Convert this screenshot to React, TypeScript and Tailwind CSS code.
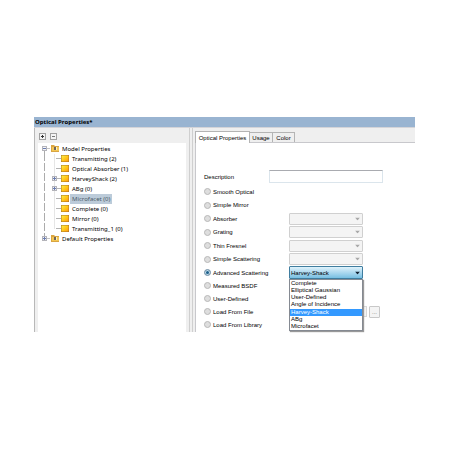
import clsx from 'clsx'

type Node = { label: string; kind: 'folder' | 'item'; box?: 'plus' | 'minus'; selected?: boolean; first?: boolean; last?: boolean }

const nodes: Node[] = [
  { label: 'Model Properties', kind: 'folder', box: 'minus', first: true },
  { label: 'Transmitting (2)', kind: 'item' },
  { label: 'Optical Absorber (1)', kind: 'item' },
  { label: 'HarveyShack (2)', kind: 'item', box: 'plus' },
  { label: 'ABg (0)', kind: 'item', box: 'plus' },
  { label: 'Microfacet (0)', kind: 'item', selected: true },
  { label: 'Complete (0)', kind: 'item' },
  { label: 'Mirror (0)', kind: 'item' },
  { label: 'Transmitting_1 (0)', kind: 'item', last: true },
  { label: 'Default Properties', kind: 'folder', box: 'plus', last: true },
]

const surfaces = [
  { label: 'Smooth Optical', select: false },
  { label: 'Simple Mirror', select: false },
  { label: 'Absorber', select: true },
  { label: 'Grating', select: true },
  { label: 'Thin Fresnel', select: true },
  { label: 'Simple Scattering', select: true },
]

const models = [
  'Complete',
  'Elliptical Gaussian',
  'User-Defined',
  'Angle of Incidence',
  'Harvey-Shack',
  'ABg',
  'Microfacet',
]

function Branch({ node }: { node: Node }) {
  const folder = node.kind === 'folder'
  const boxX = folder ? 4 : 14
  return (
    <svg width={folder ? 22 : 32} height="10" className="shrink-0" aria-hidden="true">
      <defs>
        <linearGradient id="tile" x1="0" y1="0" x2="1" y2="1">
          <stop offset="0" stopColor="#fff04a" />
          <stop offset="0.5" stopColor="#ffc81c" />
          <stop offset="1" stopColor="#ff9a10" />
        </linearGradient>
      </defs>
      {/* guide lines */}
      <path
        d={folder ? (node.first ? 'M6.5 7V10' : 'M6.5 0V3') : 'M6.5 0V7M6.5 9V10'}
        stroke="#acacac"
        fill="none"
      />
      {folder && <path d="M9 4.5H12" stroke="#c4c4c4" />}
      {!folder && <path d={node.last ? 'M16.5 0V5' : 'M16.5 0V10'} stroke="#e6e6e6" fill="none" />}
      {!folder && <path d="M18 4.5H23" stroke="#b4b4b4" />}
      {node.box && (
        <g>
          <rect x={boxX + 0.5} y="2.5" width="4" height="4" fill="#f4f4f8" stroke="#b4b4ba" />
          <path d={`M${boxX + 1} 4.5h3`} stroke="#6a7cae" />
          {node.box === 'plus' && <path d={`M${boxX + 2.5} 3v3`} stroke="#6a7cae" />}
        </g>
      )}
      {folder ? (
        <g>
          <path d="M13 1h3l1 1h4v6h-8z" fill="#d9a542" />
          <path d="M14 3h7v4h-7z" fill="#f3c654" />
          <path d="M16 3h2v3h-2z" fill="#6b6560" />
          <path d="M18 3h1v3h-1z" fill="#fff2c0" />
        </g>
      ) : (
        <g>
          <rect x="23" y="1" width="8" height="7" fill="#a87424" />
          <rect x="23.5" y="1.5" width="7" height="6" fill="url(#tile)" />
        </g>
      )}
    </svg>
  )
}

function ToolButton({ sign }: { sign: 'plus' | 'minus' }) {
  return (
    <button
      type="button"
      aria-label={sign === 'plus' ? 'Expand all' : 'Collapse all'}
      className="size-[7px] border border-[#a0a0a0] bg-[#f4f4f4]"
    >
      <svg width="5" height="5" className="block" stroke={sign === 'plus' ? '#333' : '#777'} aria-hidden="true">
        <path d={sign === 'plus' ? 'M1 2.5h3M2.5 1v3' : 'M1 2.5h3'} />
      </svg>
    </button>
  )
}

function Arrow({ dark }: { dark?: boolean }) {
  return (
    <svg
      width="5"
      height="3"
      className="pointer-events-none absolute top-1/2 right-[3px] -translate-y-1/2"
      fill={dark ? '#102030' : '#a8a8a8'}
      aria-hidden="true"
    >
      <path d="M0 0h5L2.5 3z" />
    </svg>
  )
}

function Radio({ label, checked }: { label: string; checked?: boolean }) {
  return (
    <label className="flex w-[85px] items-center gap-[2px] whitespace-nowrap">
      <input
        type="radio"
        name="surface"
        defaultChecked={checked}
        className="size-[7px] shrink-0 appearance-none rounded-full border border-[#b8b8b8] bg-[#dedede] checked:border-[#8fa4b4] checked:bg-[#1d5f8a] checked:shadow-[inset_0_0_0_1px_#c4dfed]"
      />
      {label}
    </label>
  )
}

export default function App() {
  return (
    <div className="min-h-screen bg-white pt-[117px] pr-[35px] pl-[34px] text-black">
      <div className="bg-[#efefef]">
        <h1 className="h-[10px] bg-[#99b4d1] pl-px font-['Open_Sans','Noto_Sans',sans-serif] text-[6px] leading-[10px] font-bold">
          Optical Properties*
        </h1>

        <div className="flex border-t border-[#d4d4d8]">
          <section className="flex w-[156px] shrink-0 flex-col border-r border-l border-r-[#cfcfcf] border-l-[#b8b8b8] pr-[3px] pl-[3px]">
            <div className="flex h-[15px] items-center gap-1 pt-px pl-px">
              <ToolButton sign="plus" />
              <ToolButton sign="minus" />
            </div>
            <ul className="flex-1 bg-white pt-px font-['Noto_Sans','Open_Sans',sans-serif] text-[6px] leading-[10px]">
              {nodes.map((node) => (
                <li key={node.label} className="flex h-[10px] items-center">
                  <Branch node={node} />
                  <span className={clsx('px-[2px]', node.selected && 'bg-[#bccbd9] text-[#4a5a68]')}>{node.label}</span>
                </li>
              ))}
            </ul>
          </section>

          <section className="ml-[2px] flex min-w-0 flex-1 flex-col border-l border-[#cfcfcf] pl-[2px] font-['Liberation_Sans',sans-serif] text-[6px] leading-[8px]">
            <div role="tablist" className="flex h-[15px] items-end border-b border-[#c8c8cc]">
              <button
                type="button"
                role="tab"
                aria-selected="true"
                className="-mb-px h-[12px] w-[55px] border border-b-0 border-[#b4b4b4] bg-white whitespace-nowrap"
              >
                Optical Properties
              </button>
              <button type="button" role="tab" className="h-[10px] w-[23px] border-t border-r border-[#b4b4b4]">
                Usage
              </button>
              <button type="button" role="tab" className="h-[10px] w-[22px] border-t border-r border-[#b4b4b4]">
                Color
              </button>
            </div>

            <form className="flex-1 border-l border-[#c8c8cc] bg-white pt-[27px] pb-px pl-2">
              <div className="flex items-center">
                <label htmlFor="description" className="w-[65px]">
                  Description
                </label>
                <input
                  id="description"
                  className="h-[13px] w-[114px] border border-[#dbe5ec] border-t-[#a9abb0] bg-white px-1"
                />
              </div>

              <div className="mt-[2px] grid h-[81px] grid-rows-6">
                {surfaces.map(({ label, select }) => (
                  <div key={label} className="flex items-center">
                    <Radio label={label} />
                    {select && (
                      <div className="relative">
                        <select
                          disabled
                          aria-label={label}
                          className="block h-[12px] w-[74px] appearance-none rounded-[1px] border border-[#d0d0d0] bg-[#f4f4f4] opacity-100"
                        />
                        <Arrow />
                      </div>
                    )}
                  </div>
                ))}
              </div>

              <div className="flex h-[13px] items-center">
                <Radio label="Advanced Scattering" checked />
                <div className="relative z-10">
                  <select
                    aria-label="Scattering model"
                    defaultValue="Harvey-Shack"
                    className="block h-[13px] w-[74px] appearance-none rounded-[1px] border border-[#3f7d9f] bg-linear-to-b from-[#dff2fb] to-[#77bfe2] pl-px"
                  >
                    {models.map((model) => (
                      <option key={model}>{model}</option>
                    ))}
                  </select>
                  <Arrow dark />
                  <ul
                    role="listbox"
                    aria-label="Scattering models"
                    className="absolute top-full left-0 grid h-[52px] w-[74px] grid-rows-7 border border-[#858a92] bg-white leading-[7px] shadow-[1px_1px_1px_#999]"
                  >
                    {models.map((model) => (
                      <li
                        key={model}
                        role="option"
                        aria-selected={model === 'Harvey-Shack'}
                        className={clsx('pl-px whitespace-nowrap', model === 'Harvey-Shack' && 'bg-[#3399ff] text-white')}
                      >
                        {model}
                      </li>
                    ))}
                  </ul>
                </div>
              </div>
              <div className="flex h-[13px] items-center">
                <Radio label="Measured BSDF" />
              </div>
              <div className="flex h-[13px] items-center">
                <Radio label="User-Defined" />
              </div>
              <div className="flex h-[13px] items-center">
                <Radio label="Load From File" />
                <input
                  disabled
                  aria-label="File name"
                  className="h-[11px] w-[78px] border border-[#d8d8d8] bg-[#f4f4f4]"
                />
                <button
                  type="button"
                  aria-label="Browse"
                  className="ml-[2px] h-[12px] w-[11px] rounded-[1px] border border-[#c8c8c8] bg-[#f4f4f4] text-[#707070]"
                >
                  ...
                </button>
              </div>
              <div className="flex h-[13px] items-center">
                <Radio label="Load From Library" />
              </div>
            </form>
          </section>
        </div>
      </div>
    </div>
  )
}
